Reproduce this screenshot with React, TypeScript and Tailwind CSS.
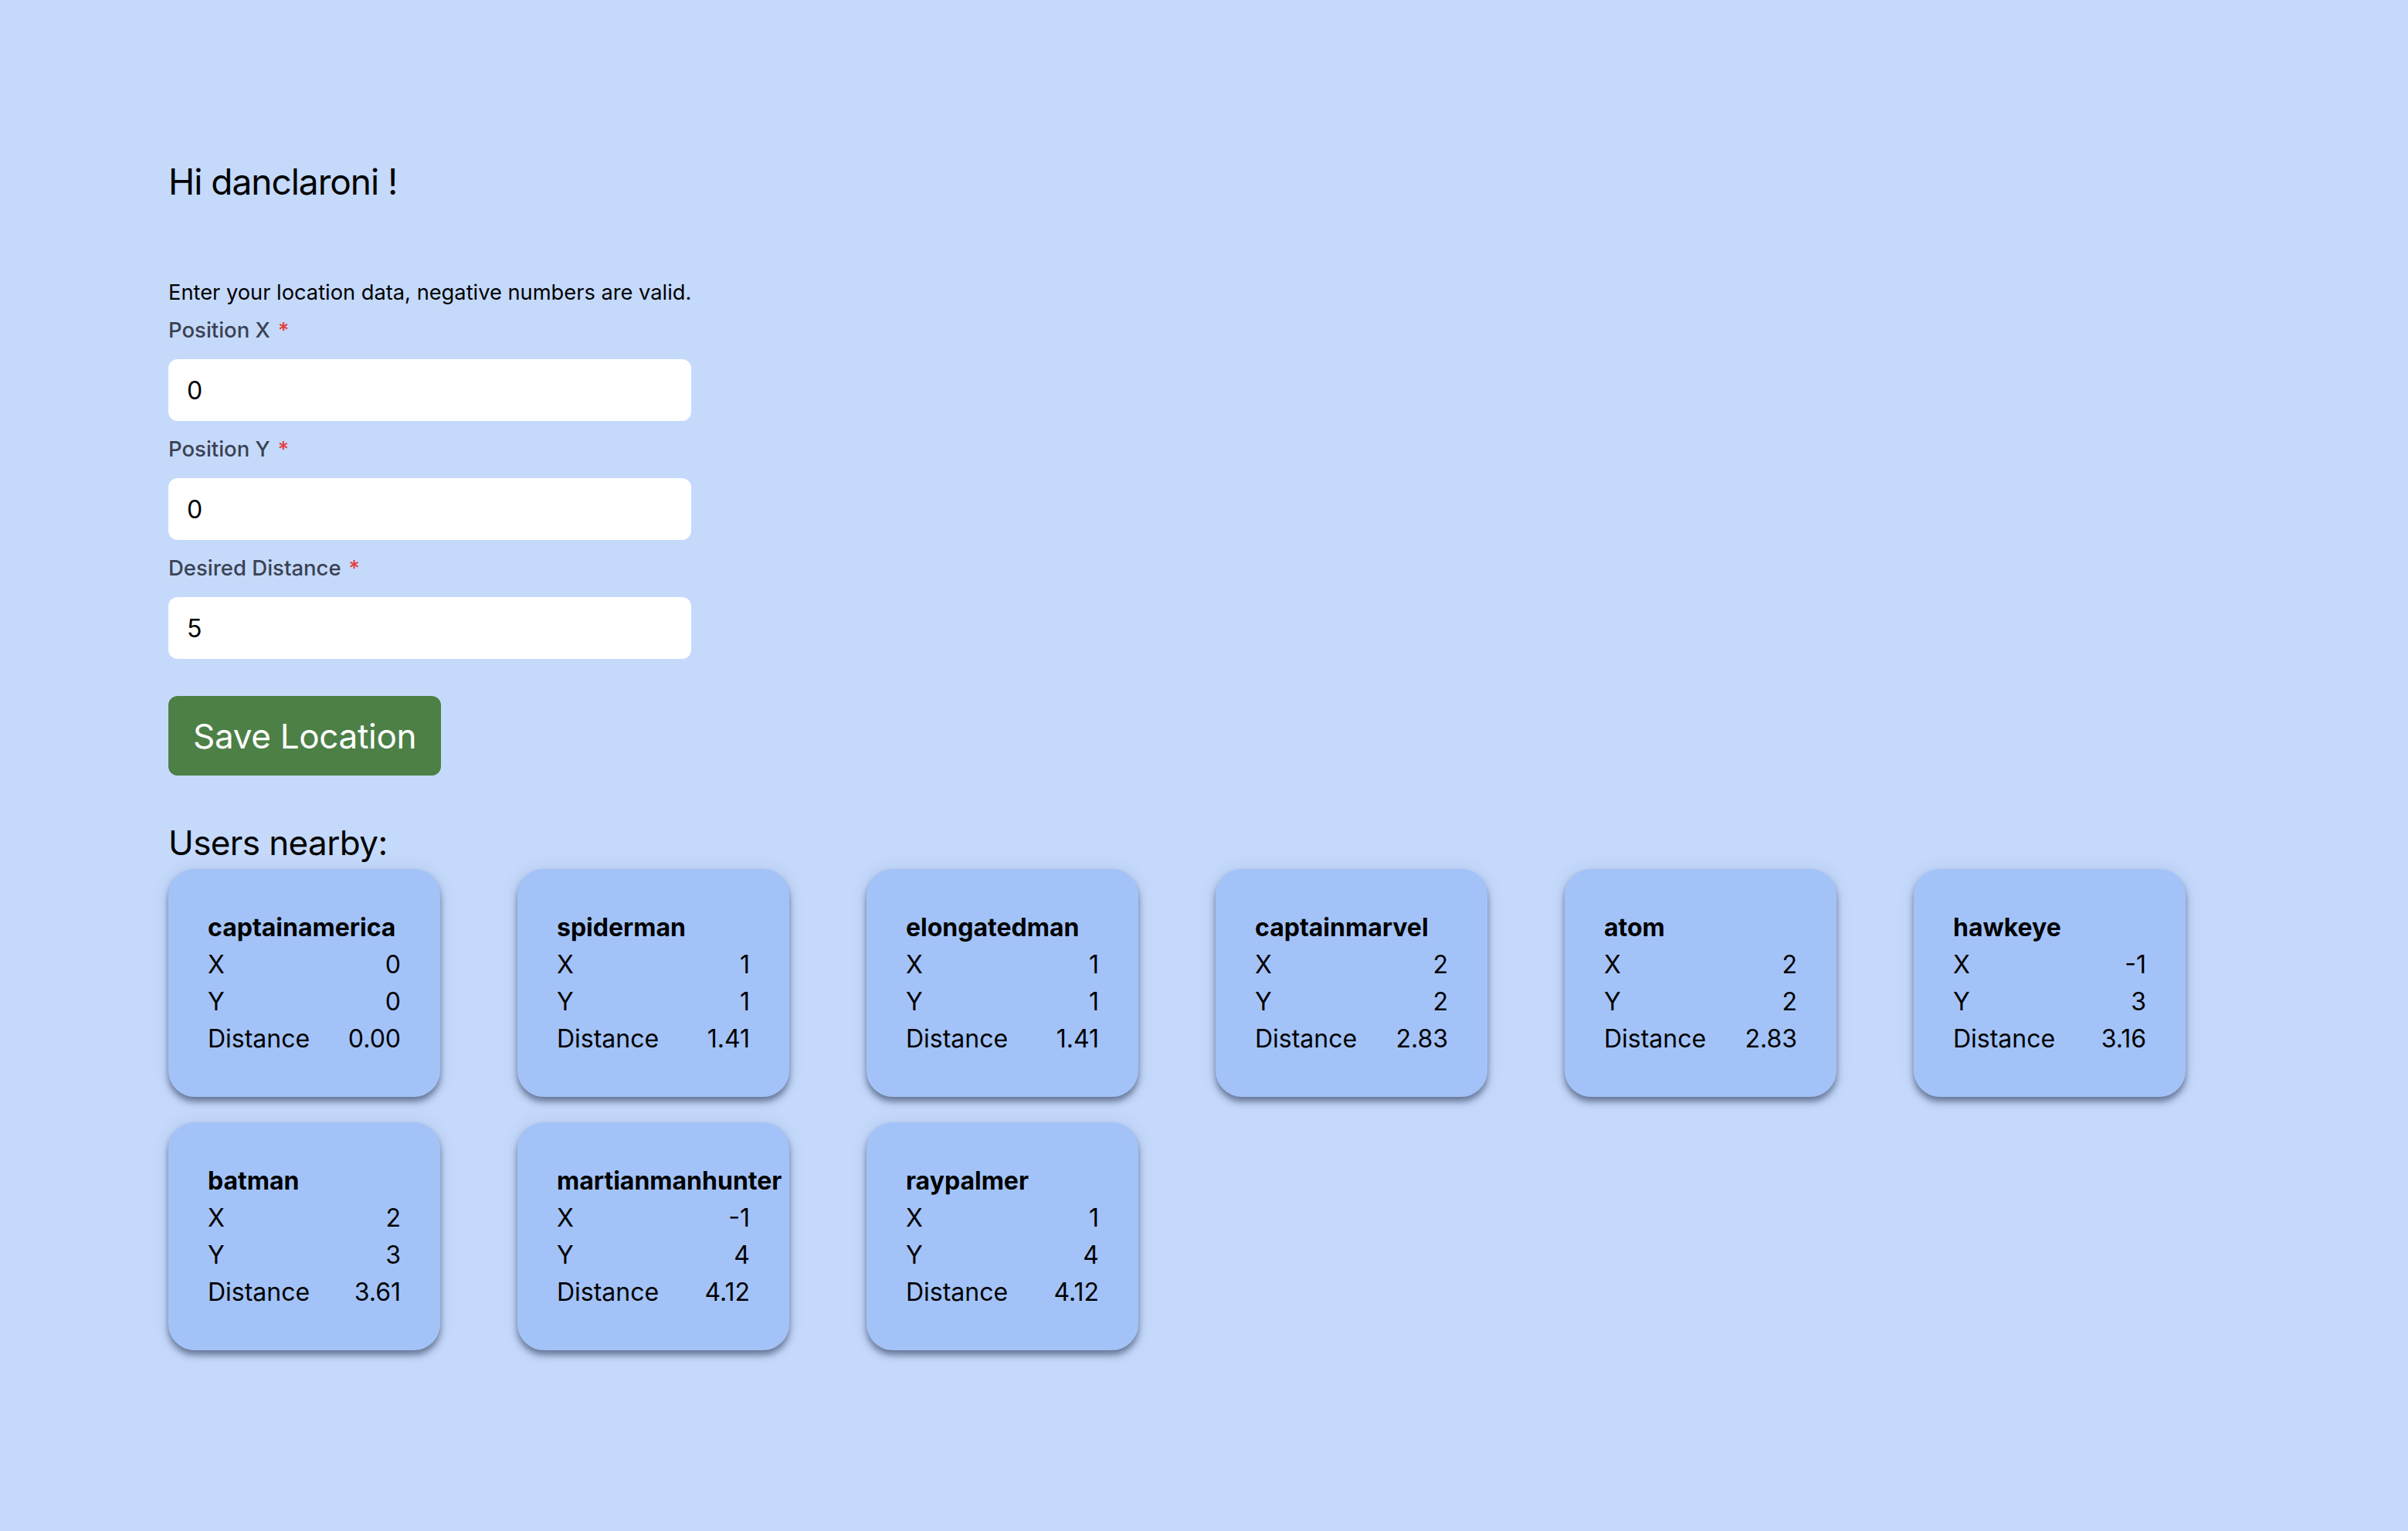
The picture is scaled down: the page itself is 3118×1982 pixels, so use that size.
import React from "react";

type NearbyUser = {
  name: string;
  x: number;
  y: number;
  distance: string;
};

const USERS: NearbyUser[] = [
  { name: "captainamerica", x: 0, y: 0, distance: "0.00" },
  { name: "spiderman", x: 1, y: 1, distance: "1.41" },
  { name: "elongatedman", x: 1, y: 1, distance: "1.41" },
  { name: "captainmarvel", x: 2, y: 2, distance: "2.83" },
  { name: "atom", x: 2, y: 2, distance: "2.83" },
  { name: "hawkeye", x: -1, y: 3, distance: "3.16" },
  { name: "batman", x: 2, y: 3, distance: "3.61" },
  { name: "martianmanhunter", x: -1, y: 4, distance: "4.12" },
  { name: "raypalmer", x: 1, y: 4, distance: "4.12" },
];

function Field({ label, value, className }: { label: string; value: string; className?: string }) {
  return (
    <div className={className}>
      <label className="block text-[27.5px] leading-[32px] font-medium text-[#3a4252]">
        {label}
        <span className="ml-[10px] text-[#e53e3e]">*</span>
      </label>
      <input
        type="number"
        defaultValue={value}
        className="mt-[22px] block h-[80px] w-[677px] rounded-[12px] bg-white px-[24px] text-[32px] text-black outline-none"
      />
    </div>
  );
}

function UserCard({ user }: { user: NearbyUser }) {
  return (
    <div className="w-[352px] rounded-[34px] bg-[#a3c3f8] px-[51px] pt-[52px] pb-[51px] text-[32px] leading-[48px] text-black shadow-[0_6px_8px_rgba(30,40,70,0.55),0_0_24px_rgba(30,50,100,0.08)]">
      <div className="whitespace-nowrap font-bold">{user.name}</div>
      <div className="flex justify-between">
        <span>X</span>
        <span>{user.x}</span>
      </div>
      <div className="flex justify-between">
        <span>Y</span>
        <span>{user.y}</span>
      </div>
      <div className="flex justify-between">
        <span>Distance</span>
        <span>{user.distance}</span>
      </div>
    </div>
  );
}

export default function App() {
  return (
    <div className="min-h-[1982px] bg-[#c5d9fb] px-[218px] pt-[207px] font-['Inter',sans-serif] text-black">
      <h1 className="text-[46px] leading-[56px] tracking-[-1px]">Hi danclaroni !</h1>

      <p className="mt-[98px] text-[27.25px] leading-[36px]">
        Enter your location data, negative numbers are valid.
      </p>

      <Field label="Position X" value="0" className="mt-[14px]" />
      <Field label="Position Y" value="0" className="mt-[20px]" />
      <Field label="Desired Distance" value="5" className="mt-[20px]" />

      <button className="mt-[48px] flex h-[103px] items-center rounded-[12px] bg-[#4c8046] px-[32px] text-[44px] tracking-[-0.3px] text-white">
        Save Location
      </button>

      <h2 className="mt-[61px] text-[44px] leading-[52px] tracking-[-0.6px]">Users nearby:</h2>

      <div className="mt-[8px] flex flex-wrap gap-x-[100px] gap-y-[33px]">
        {USERS.map((u) => (
          <UserCard key={u.name} user={u} />
        ))}
      </div>
    </div>
  );
}
